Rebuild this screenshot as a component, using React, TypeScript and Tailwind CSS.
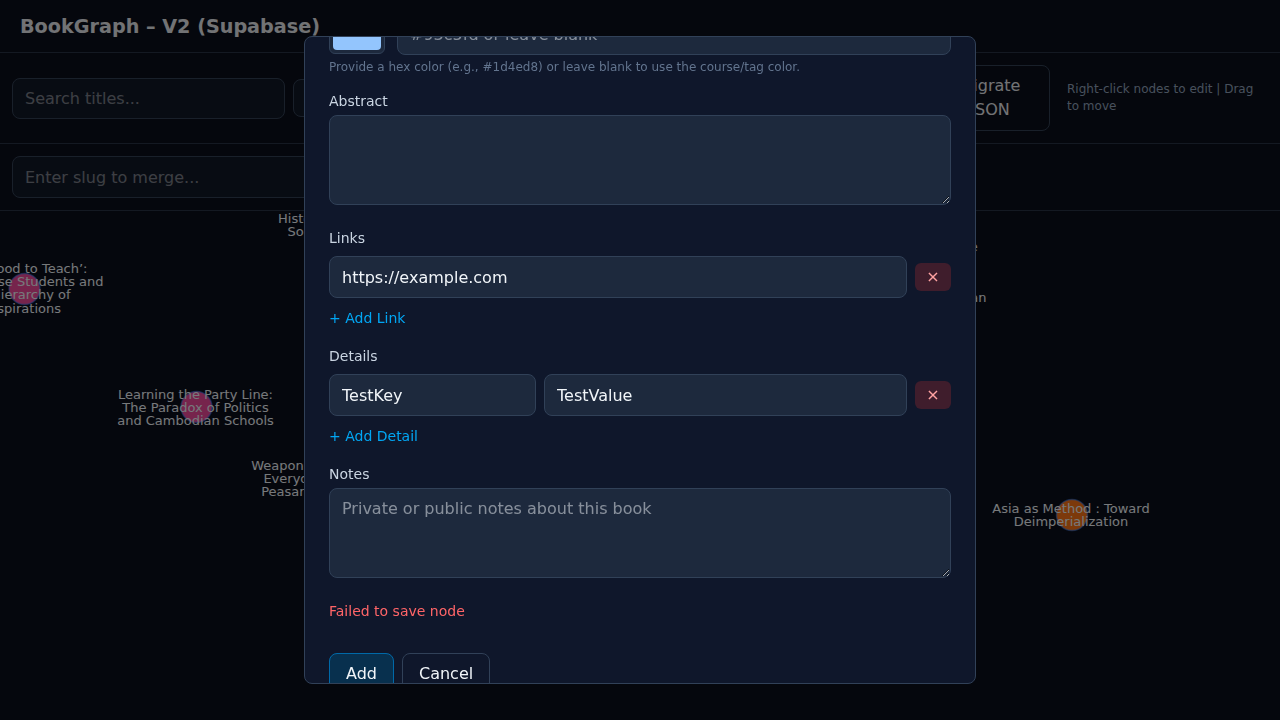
import React, { useLayoutEffect, useRef } from 'react';

type GraphNode = {
  id: string;
  x: number;
  y: number;
  color: string;
  labelX: number;
  labelY: number; // centre of first label line
  lines: string[];
};

// graph coordinates are relative to the top of the canvas (page y - 211)
const NODES: GraphNode[] = [
  {
    id: 'good-to-teach',
    x: 24.5,
    y: 78,
    color: '#ec4899',
    labelX: 24.7,
    labelY: 57,
    lines: ['‘So Good to Teach’:', 'Taiwanese Students and', 'a Hierarchy of', 'Aspirations'],
  },
  {
    id: 'party-line',
    x: 196.5,
    y: 196,
    color: '#ec4899',
    labelX: 195.5,
    labelY: 183,
    lines: ['Learning the Party Line:', 'The Paradox of Politics', 'and Cambodian Schools'],
  },
  {
    id: 'sea-history',
    x: 336,
    y: 13,
    color: '#22c55e',
    labelX: 336,
    labelY: 7,
    lines: ['History of Modern', 'Southeast Asia'],
  },
  {
    id: 'weapons',
    x: 324,
    y: 267,
    color: '#eab308',
    labelX: 324,
    labelY: 254,
    lines: ['Weapons of the Weak:', 'Everyday Forms of', 'Peasant Resistance'],
  },
  {
    id: 'colonial',
    x: 942,
    y: 28,
    color: '#6366f1',
    labelX: 942,
    labelY: 22,
    lines: ['Colonial', 'Knowledge'],
  },
  {
    id: 'japan',
    x: 942,
    y: 80,
    color: '#6366f1',
    labelX: 942,
    labelY: 73,
    lines: ['Schooling', 'Modern Japan'],
  },
  {
    id: 'asia-method',
    x: 1072,
    y: 304,
    color: '#f97316',
    labelX: 1071,
    labelY: 297,
    lines: ['Asia as Method : Toward', 'Deimperialization'],
  },
];

const fieldClass =
  'h-[42px] w-full rounded-lg border border-slate-700 bg-slate-800 px-3 text-base text-slate-100 outline-none';
const areaClass =
  'block h-[90px] w-full resize-y rounded-lg border border-slate-700 bg-slate-800 px-3 py-2 text-base text-slate-100 outline-none';

const Graph: React.FC = () => (
  <svg width={1280} height={509} className="absolute inset-0">
    {NODES.map((n) => (
      <g key={n.id}>
        <circle cx={n.x} cy={n.y} r={15.5} fill={n.color} stroke="#3b82f6" strokeOpacity={0.55} strokeWidth={1.5} />
        <text
          textAnchor="middle"
          fontSize={13}
          fontFamily="'DejaVu Sans', sans-serif"
          fill="#eef2f7"
        >
          {n.lines.map((line, i) => (
            <tspan key={i} x={n.labelX} y={n.labelY + i * 13.3 + 4.7}>
              {line}
            </tspan>
          ))}
        </text>
      </g>
    ))}
  </svg>
);

const App: React.FC = () => {
  const modalRef = useRef<HTMLDivElement>(null);
  const colorRowRef = useRef<HTMLDivElement>(null);

  useLayoutEffect(() => {
    // the captured state has the form scrolled down to the colour field
    if (modalRef.current && colorRowRef.current) {
      modalRef.current.scrollTop = colorRowRef.current.offsetTop + 24;
    }
  }, []);

  return (
    <div className="flex h-screen flex-col overflow-hidden bg-[#0a0e1a] font-['DejaVu_Sans',sans-serif] text-gray-200">
      <header className="border-b border-[#283244] px-5 pt-[13px] pb-[11px]">
        <h1 className="text-[19.2px] leading-7 font-bold text-gray-200">BookGraph – V2 (Supabase)</h1>
      </header>

      <div className="flex items-center gap-2 border-b border-[#283244] px-3 py-3">
        <input
          placeholder="Search titles..."
          className="h-[41px] w-[273px] rounded-lg border border-[#334155] bg-[#111827] px-3 text-base text-gray-200 outline-none"
        />
        <div className="flex h-[38px] w-[150px] items-center rounded-lg border border-[#334155] bg-[#111827] px-3 text-sm">
          All courses
        </div>
        <button className="h-[42px] w-[110px] rounded-lg border border-[#334155] text-base">Add Book</button>
        <button className="h-[42px] w-[110px] rounded-lg border border-[#334155] text-base">Export</button>
        <button className="h-[42px] w-[120px] rounded-lg border border-[#334155] text-base">Import</button>
        <button className="h-[42px] w-[107px] rounded-lg border border-[#334155] text-base">Reset</button>
        <button className="w-[120px] rounded-lg border border-[#334155] px-4 py-2 text-center text-base leading-6 text-gray-200">
          Migrate JSON
        </button>
        <p className="ml-[9px] w-[195px] text-xs leading-[17px] text-slate-400">
          Right-click nodes to edit | Drag to move
        </p>
      </div>

      <div className="flex items-center gap-2 border-b border-[#283244] px-3 py-3">
        <input
          placeholder="Enter slug to merge..."
          className="h-[42px] w-[300px] rounded-lg border border-[#334155] bg-[#111827] px-3 text-base text-gray-200 outline-none"
        />
        <button className="h-[42px] rounded-lg border border-[#334155] px-4 text-base">Merge</button>
      </div>

      <div className="relative flex-1 overflow-hidden">
        <Graph />
      </div>

      <div className="fixed inset-0 z-50 flex items-center justify-center bg-black/50">
        <div
          ref={modalRef}
          className="relative max-h-[90vh] w-full max-w-2xl overflow-hidden rounded-lg border border-slate-700 bg-slate-900 p-6"
        >
          <h2 className="mb-4 text-lg font-semibold text-slate-100">Add Book</h2>

          <label className="mb-1 block text-sm text-slate-300">Title</label>
          <input defaultValue="Test Book" className={fieldClass} />
          <label className="mt-4 mb-1 block text-sm text-slate-300">Authors</label>
          <input placeholder="Comma separated" className={fieldClass} />
          <label className="mt-4 mb-1 block text-sm text-slate-300">Course / Tag</label>
          <input placeholder="e.g. EDU 210" className={fieldClass} />
          <label className="mt-4 mb-1 block text-sm text-slate-300">Node color</label>

          <div ref={colorRowRef} className="flex items-center gap-3">
            <div className="h-10 w-14 shrink-0 rounded-md border border-slate-700 bg-slate-800 p-[3px]">
              <div className="h-full w-full rounded-sm bg-[#93c5fd]" />
            </div>
            <input placeholder="#93c5fd or leave blank" className={fieldClass} />
          </div>
          <p className="mt-1 text-xs leading-4 text-slate-500">
            Provide a hex color (e.g., #1d4ed8) or leave blank to use the course/tag color.
          </p>

          <label className="mt-4 mb-1 block text-sm text-slate-300">Abstract</label>
          <textarea className={areaClass} />

          <div className="mt-[23px]">
            <div className="mb-2 text-sm text-slate-300">Links</div>
            <div className="flex items-center gap-2">
              <input defaultValue="https://example.com" className={fieldClass} />
              <button className="h-7 w-9 shrink-0 rounded-md bg-[#3f1d2c] text-base leading-none text-red-300">×</button>
            </div>
            <button className="mt-2 block py-0.5 text-sm text-sky-500">+ Add Link</button>
          </div>

          <div className="mt-4">
            <div className="mb-2 text-sm text-slate-300">Details</div>
            <div className="flex items-center gap-2">
              <input defaultValue="TestKey" className={`${fieldClass} !w-[207px] shrink-0`} />
              <input defaultValue="TestValue" className={fieldClass} />
              <button className="h-7 w-9 shrink-0 rounded-md bg-[#3f1d2c] text-base leading-none text-red-300">×</button>
            </div>
            <button className="mt-2 block py-0.5 text-sm text-sky-500">+ Add Detail</button>
          </div>

          <label className="mt-4 mb-1 block text-sm text-slate-300">Notes</label>
          <textarea placeholder="Private or public notes about this book" className={areaClass} />

          <p className="mt-[23px] text-sm text-red-400">Failed to save node</p>

          <div className="mt-8 flex gap-2">
            <button className="rounded-lg border border-sky-700 bg-sky-900/50 px-4 py-2 text-base text-slate-100">
              Add
            </button>
            <button className="rounded-lg border border-slate-700 px-4 py-2 text-base text-slate-100">Cancel</button>
          </div>
        </div>
      </div>
    </div>
  );
};

export default App;
